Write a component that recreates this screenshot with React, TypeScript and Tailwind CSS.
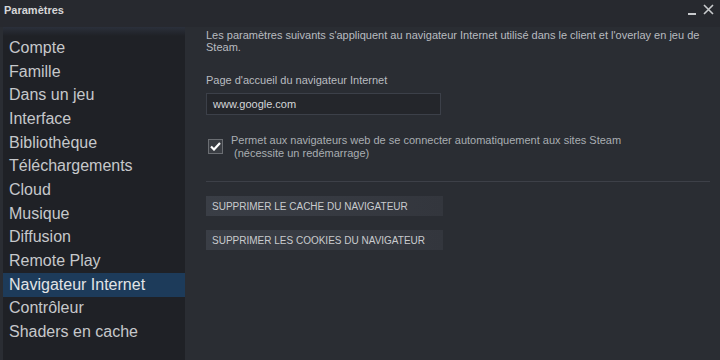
const items = [
  "Compte",
  "Famille",
  "Dans un jeu",
  "Interface",
  "Bibliothèque",
  "Téléchargements",
  "Cloud",
  "Musique",
  "Diffusion",
  "Remote Play",
  "Navigateur Internet",
  "Contrôleur",
  "Shaders en cache",
];

export default function App() {
  return (
    <div className="w-[720px] h-[360px] overflow-hidden bg-[#2a2d33] flex flex-col font-['Liberation_Sans',Arial,sans-serif]">
      <div className="h-[27px] flex items-start justify-between px-[4px] pt-[2px] bg-[#27292f]">
        <span className="text-[11px] font-bold text-[#d6d7d9]">Paramètres</span>
        <div className="flex items-center gap-[6px] pr-[2px] pt-[2px] text-[#c8cacd]">
          <svg width="9" height="12" viewBox="0 0 9 12">
            <rect x="0" y="9" width="8" height="2" fill="currentColor" />
          </svg>
          <svg width="11" height="12" viewBox="0 0 11 12">
            <path d="M1 1 L10 10 M10 1 L1 10" stroke="currentColor" strokeWidth="1.6" />
          </svg>
        </div>
      </div>
      <div className="flex flex-1 min-h-0">
        <div className="w-[182px] ml-[3px] bg-[#1f2126] flex flex-col">
          <div className="h-[9px] bg-gradient-to-b from-[#2b303b] to-[#1f2126]" />
          {items.map((it) => (
            <div
              key={it}
              className={
                "h-[23.7px] flex items-center pl-[6px] text-[16px] leading-none text-[#c6c8cb] " +
                (it === "Navigateur Internet" ? "bg-[#1d3b5a] text-[#e2e4e6]" : "")
              }
            >
              {it}
            </div>
          ))}
        </div>
        <div className="flex-1 pl-[21px] pr-[10px] pt-[2px] text-[#b9bcc0]">
          <p className="text-[11px] leading-[12px] w-[495px]">
            Les paramètres suivants s'appliquent au navigateur Internet utilisé dans le client et l'overlay en jeu de Steam.
          </p>
          <div className="mt-[21px] text-[11px] leading-[12px]">Page d'accueil du navigateur Internet</div>
          <div className="mt-[7px] w-[235px] h-[22px] border border-[#3c4049] bg-[#24262b] flex items-center pl-[6px] text-[11px] text-[#d4d6d9]">
            www.google.com
          </div>
          <div className="mt-[19px] flex items-start">
            <div className="mt-[5px] ml-[2px] w-[15px] h-[15px] border border-[#6b6e73] bg-[#3a3d43] flex items-center justify-center">
              <svg width="11" height="9" viewBox="0 0 11 9">
                <path d="M1 4.5 L4 7.5 L10 1" stroke="#ffffff" strokeWidth="2.2" fill="none" />
              </svg>
            </div>
            <div className="ml-[8px] text-[11px] leading-[13px] text-[#a9adb2]">
              <div>Permet aux navigateurs web de se connecter automatiquement aux sites Steam</div>
              <div>&nbsp;(nécessite un redémarrage)</div>
            </div>
          </div>
          <div className="mt-[21px] h-px bg-[#3d4048]" />
          <div className="mt-[14px] w-[237px] h-[20px] bg-gradient-to-r from-[#3a3e46] to-[#33363d] flex items-center pl-[6px] text-[10px] text-[#c9cbce]">
            SUPPRIMER LE CACHE DU NAVIGATEUR
          </div>
          <div className="mt-[14px] w-[237px] h-[20px] bg-gradient-to-r from-[#3a3e46] to-[#33363d] flex items-center pl-[6px] text-[10px] text-[#c9cbce]">
            SUPPRIMER LES COOKIES DU NAVIGATEUR
          </div>
        </div>
      </div>
    </div>
  );
}
